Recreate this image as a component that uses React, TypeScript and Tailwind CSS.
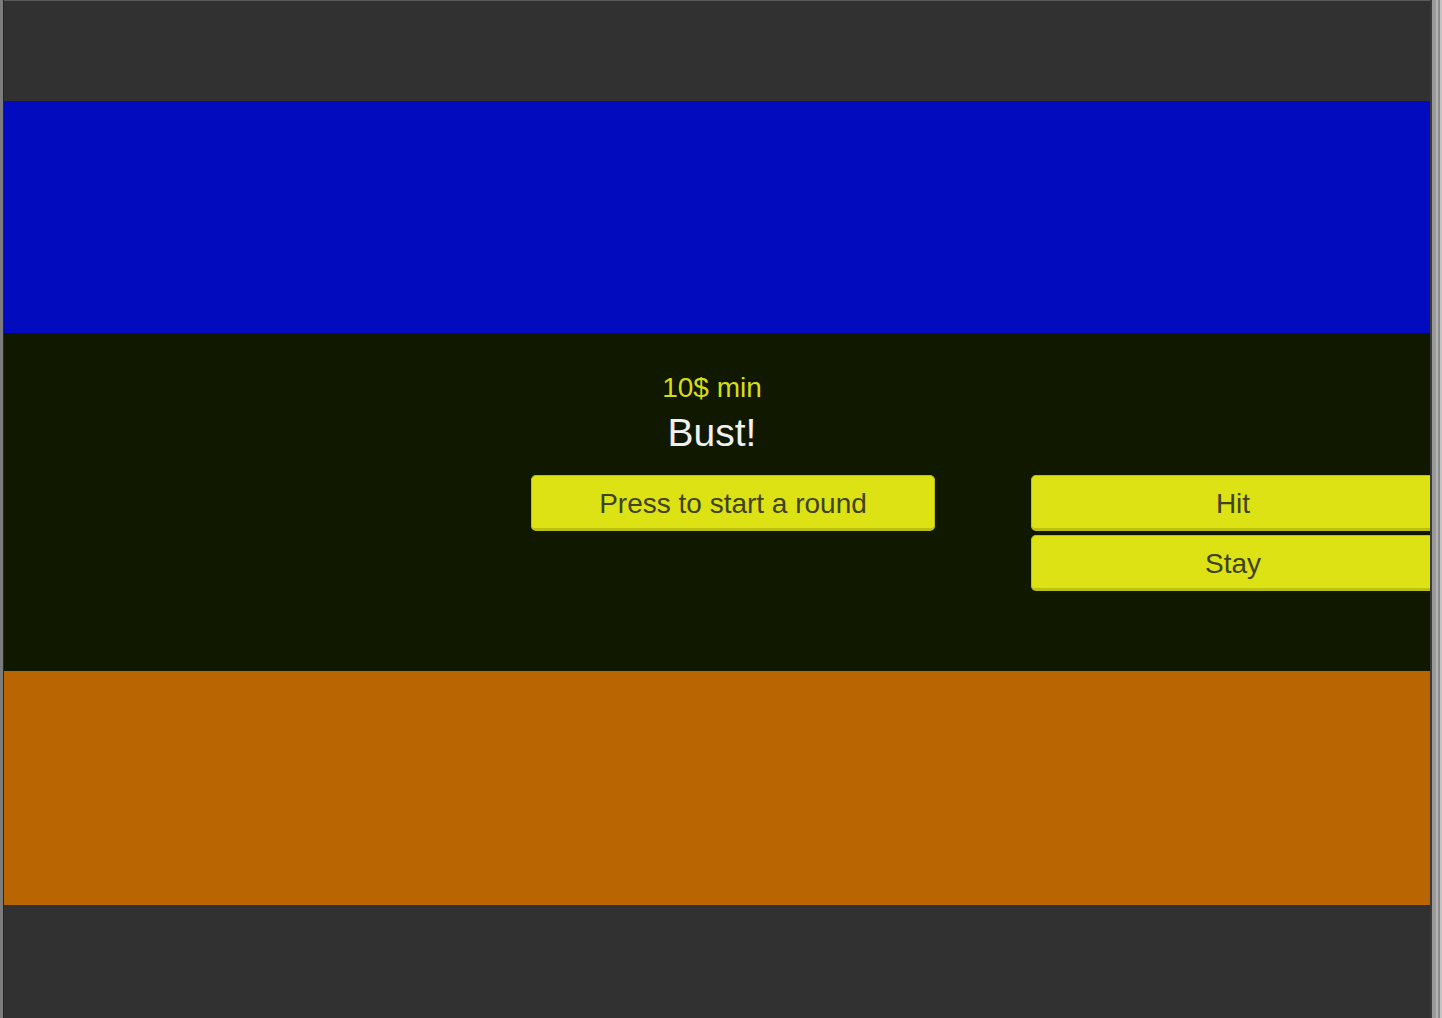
export default function App() {
  return (
    <div className="flex flex-row w-[1442px] h-[1018px] overflow-hidden bg-[#323232] font-['Liberation_Sans',Arial,sans-serif]">
      <div className="w-[3px] h-full bg-[#7c7c7c]" />
      <div className="w-[1px] h-full bg-[#262626]" />

      <div className="flex flex-col w-[1426px] h-full overflow-hidden">
        <div className="h-[1px] bg-[#5a5a5a]" />
        <div className="h-[100px] bg-[#313131]" />
        <div className="h-[232px] bg-[#030bbe]" />

        <div className="h-[338px] bg-[#101800] flex flex-col pt-[39px]">
          <div className="ml-[506px] w-[404px] flex flex-col items-center">
            <div className="text-[28px] leading-[32px] text-[#d6de10]">10$ min</div>
            <div className="text-[39px] leading-[44px] text-[#f0f0f0] mt-[7px]">Bust!</div>
          </div>

          <div className="flex flex-row mt-[20px] ml-[527px] gap-[96px]">
            <button className="w-[404px] h-[56px] shrink-0 pt-[3px] rounded-[5px] bg-[#dce214] border border-[#bcc010] border-b-[3px] text-[28px] text-[#404222]">
              Press to start a round
            </button>
            <div className="flex flex-col gap-[4px] shrink-0">
              <button className="w-[404px] h-[56px] pt-[3px] rounded-[5px] bg-[#dce214] border border-[#bcc010] border-b-[3px] text-[28px] text-[#404222]">
                Hit
              </button>
              <button className="w-[404px] h-[56px] pt-[3px] rounded-[5px] bg-[#dce214] border border-[#bcc010] border-b-[3px] text-[28px] text-[#404222]">
                Stay
              </button>
            </div>
          </div>
        </div>

        <div className="h-[234px] bg-[#b86502]" />
        <div className="flex-1 bg-[#313131]" />
      </div>

      <div className="w-[2px] h-full bg-[#3a3a3a]" />
      <div className="w-[4px] h-full bg-[#9a9a9a]" />
      <div className="w-[2px] h-full bg-[#b4b4b4]" />
      <div className="w-[2px] h-full bg-[#8c8c8c]" />
      <div className="w-[2px] h-full bg-[#c4c4c4]" />
    </div>
  );
}
